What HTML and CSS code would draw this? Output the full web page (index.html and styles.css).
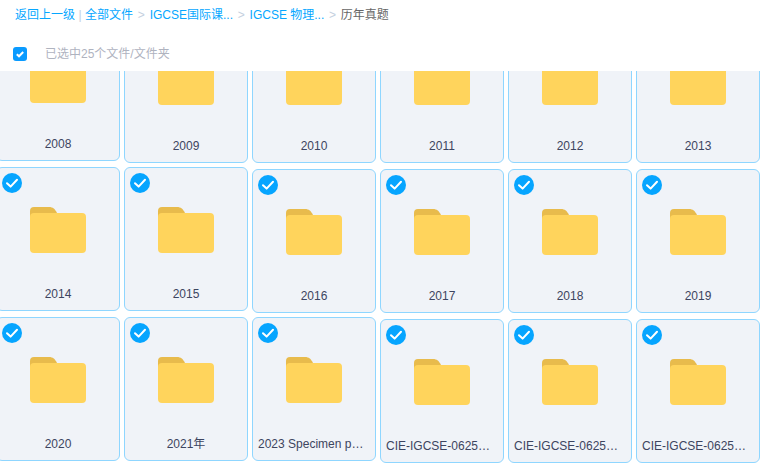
FILE: index.html
```html
<!DOCTYPE html>
<html lang="en">
<head>
    <meta charset="UTF-8">
    <meta name="viewport" content="width=device-width, initial-scale=1.0">
    <title>历年真题</title>
    <link rel="stylesheet" href="styles.css">
</head>
<body>
    <svg class="sprites" width="0" height="0">
        <symbol id="folder" viewBox="0 0 56 46">
            <path d="M0 4a4 4 0 0 1 4-4h15c4 0 6 2 8 6v6H0z" fill="#e8bb4c"/>
            <rect y="6" width="56" height="40" rx="4" fill="#ffd45c"/>
        </symbol>
        <symbol id="tick" viewBox="0 0 20 20">
            <circle cx="10" cy="10" r="10" fill="#06a5ff"/>
            <path d="M5 10.2l3.6 3.4L15 6.8" fill="none" stroke="#fff" stroke-width="2" stroke-linecap="round" stroke-linejoin="round"/>
        </symbol>
    </svg>

    <div class="toolbar">
        <div class="crumbs">
            <a>返回上一级</a><span class="bar">|</span><a>全部文件</a>
            <span class="sep">&gt;</span><a>IGCSE国际课...</a>
            <span class="sep">&gt;</span><a>IGCSE 物理...</a>
            <span class="sep">&gt;</span><span class="current">历年真题</span>
        </div>
        <div class="selected">
            <svg class="checkbox" viewBox="0 0 14 14">
                <rect width="14" height="14" rx="3" fill="#0a9bff"/>
                <path d="M3.8 7.2l2.2 2.1 4.2-4.3" fill="none" stroke="#fff" stroke-width="2"/>
            </svg>
            <span>已选中25个文件/文件夹</span>
        </div>
    </div>

    <div class="grid">
        <div class="card raised"><svg class="tick"><use href="#tick"/></svg><svg class="folder"><use href="#folder"/></svg><div class="name">2008</div></div>
        <div class="card"><svg class="tick"><use href="#tick"/></svg><svg class="folder"><use href="#folder"/></svg><div class="name">2009</div></div>
        <div class="card"><svg class="tick"><use href="#tick"/></svg><svg class="folder"><use href="#folder"/></svg><div class="name">2010</div></div>
        <div class="card"><svg class="tick"><use href="#tick"/></svg><svg class="folder"><use href="#folder"/></svg><div class="name">2011</div></div>
        <div class="card"><svg class="tick"><use href="#tick"/></svg><svg class="folder"><use href="#folder"/></svg><div class="name">2012</div></div>
        <div class="card"><svg class="tick"><use href="#tick"/></svg><svg class="folder"><use href="#folder"/></svg><div class="name">2013</div></div>

        <div class="card raised"><svg class="tick"><use href="#tick"/></svg><svg class="folder"><use href="#folder"/></svg><div class="name">2014</div></div>
        <div class="card raised"><svg class="tick"><use href="#tick"/></svg><svg class="folder"><use href="#folder"/></svg><div class="name">2015</div></div>
        <div class="card"><svg class="tick"><use href="#tick"/></svg><svg class="folder"><use href="#folder"/></svg><div class="name">2016</div></div>
        <div class="card"><svg class="tick"><use href="#tick"/></svg><svg class="folder"><use href="#folder"/></svg><div class="name">2017</div></div>
        <div class="card"><svg class="tick"><use href="#tick"/></svg><svg class="folder"><use href="#folder"/></svg><div class="name">2018</div></div>
        <div class="card"><svg class="tick"><use href="#tick"/></svg><svg class="folder"><use href="#folder"/></svg><div class="name">2019</div></div>

        <div class="card raised"><svg class="tick"><use href="#tick"/></svg><svg class="folder"><use href="#folder"/></svg><div class="name">2020</div></div>
        <div class="card raised"><svg class="tick"><use href="#tick"/></svg><svg class="folder"><use href="#folder"/></svg><div class="name">2021年</div></div>
        <div class="card raised"><svg class="tick"><use href="#tick"/></svg><svg class="folder"><use href="#folder"/></svg><div class="name long">2023 Specimen p…</div></div>
        <div class="card"><svg class="tick"><use href="#tick"/></svg><svg class="folder"><use href="#folder"/></svg><div class="name long">CIE-IGCSE-0625…</div></div>
        <div class="card"><svg class="tick"><use href="#tick"/></svg><svg class="folder"><use href="#folder"/></svg><div class="name long">CIE-IGCSE-0625…</div></div>
        <div class="card"><svg class="tick"><use href="#tick"/></svg><svg class="folder"><use href="#folder"/></svg><div class="name long">CIE-IGCSE-0625…</div></div>
    </div>
</body>
</html>
```

FILE: styles.css
```css
html, body {
    margin: 0;
    padding: 0;
    height: 100%;
    overflow: hidden;
    background: #fff;
}
body {
    font-family: "Liberation Sans", "Noto Sans CJK SC", sans-serif;
    font-size: 12px;
}
.sprites {
    display: block;
    height: 0;
}
.toolbar {
    position: absolute;
    top: 0;
    left: 0;
    right: 0;
    height: 71px;
    box-sizing: border-box;
    padding: 6px 0 0 15px;
    background: #fff;
    z-index: 2;
}
.crumbs {
    display: flex;
    align-items: center;
    height: 18px;
    line-height: 18px;
    color: #06a7ff;
    white-space: nowrap;
}
.crumbs .bar {
    width: 10px;
    text-align: center;
    color: #c4d0e0;
}
.crumbs .sep {
    width: 16.6px;
    text-align: center;
    color: #c4d0e0;
}
.crumbs .current {
    color: #666;
}
.selected {
    display: flex;
    align-items: center;
    gap: 18px;
    height: 14px;
    margin: 23px 0 0 -2px;
    color: #afb3bf;
}
.selected span {
    margin-bottom: 4px;
}
.checkbox {
    width: 14px;
    height: 14px;
}
.grid {
    display: grid;
    grid-template-columns: repeat(6, 124px);
    grid-auto-rows: 144px;
    gap: 6px 4px;
    margin: 19px 0 0 -4px;
}
.card {
    position: relative;
    box-sizing: border-box;
    height: 144px;
    padding: 39px 5px 0;
    background: #f0f3f8;
    border: 1px solid #8fd6ff;
    border-radius: 6px;
    text-align: center;
}
.raised {
    margin-top: -2px;
}
.tick {
    position: absolute;
    top: 5px;
    left: 5px;
    width: 20px;
    height: 20px;
}
.folder {
    display: block;
    width: 56px;
    height: 46px;
    margin: 0 auto 32px;
}
.name {
    height: 18px;
    line-height: 18px;
    color: #3d4560;
    white-space: nowrap;
}
.long {
    text-align: left;
}
```
